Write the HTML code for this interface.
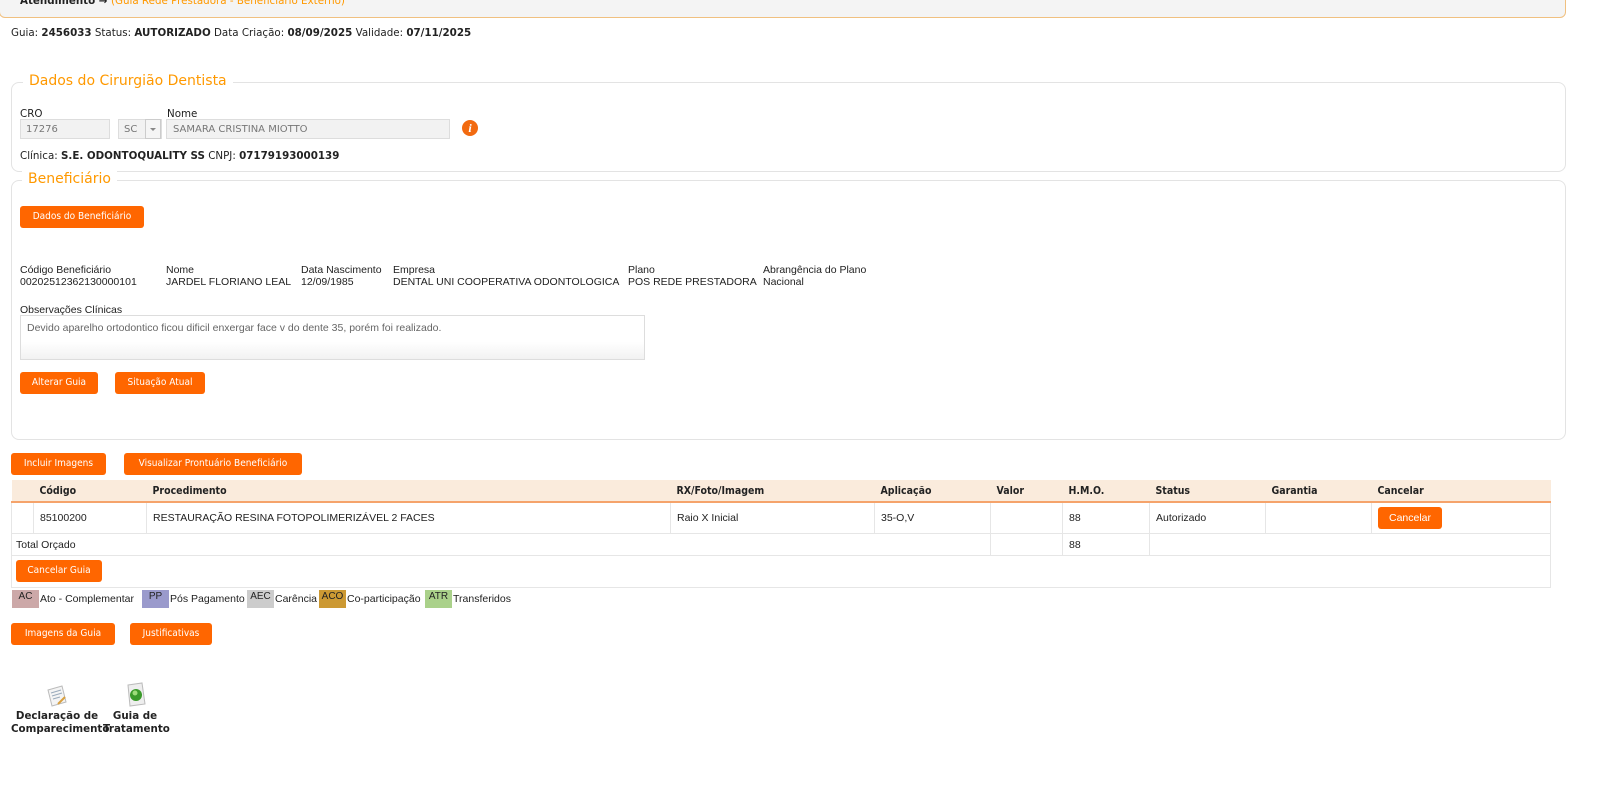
<!DOCTYPE html>
<html><head><meta charset="utf-8"><style>
body{margin:0;width:1608px;height:786px;background:#fff;font-family:"Liberation Sans",sans-serif;font-size:10.5px;color:#222;position:relative;overflow:hidden}
.a{position:absolute;white-space:nowrap}
.v{font-family:"DejaVu Sans",sans-serif;font-size:10.3px}
.btn{position:absolute;background:#ff6600;color:#fff;border-radius:3px;height:22px;line-height:22px;text-align:center;font-size:10px;font-family:"DejaVu Sans Condensed","DejaVu Sans",sans-serif}
.fs{position:absolute;border:1px solid #e3e3e3;border-radius:8px}
.lg{position:absolute;background:#fff;color:#ff9900;font-size:14px;padding:0 6px;font-family:"DejaVu Sans",sans-serif}
.inp{position:absolute;background:#f2f2f2;border:1px solid #ddd;height:20px;line-height:20px;color:#777;font-size:10px;padding-left:8px;box-sizing:border-box;font-family:"DejaVu Sans",sans-serif}
table{border-collapse:collapse;position:absolute;left:11px;top:480px;width:1540px;font-size:10.5px}
td,th{height:21px;padding:0 6px;text-align:left;border:1px solid #e6e6e6}
th{background:#faebdc;border:none;border-bottom:2px solid #f5a36b;font-family:"DejaVu Sans Condensed","DejaVu Sans",sans-serif}
.leg{position:absolute;top:590px;height:18px;line-height:14px;font-size:10px;text-align:center;width:27px}
</style></head><body>
<div class="a" style="left:-1px;top:-10px;width:1565px;height:26px;background:#f4f4f4;border:1px solid #f0c080;border-radius:0 0 6px 6px"></div>
<div class="a v" style="left:20px;top:-5px;font-weight:bold">Atendimento → <span style="color:#ff9900;font-weight:normal">(Guia Rede Prestadora - Beneficiário Externo)</span></div>
<div class="a v" style="left:11px;top:27px">Guia: <b>2456033</b> Status: <b>AUTORIZADO</b> Data Criação: <b>08/09/2025</b> Validade: <b>07/11/2025</b></div>

<div class="fs" style="left:11px;top:82px;width:1553px;height:88px"></div>
<div class="lg" style="left:23px;top:73px">Dados do Cirurgião Dentista</div>
<div class="a v" style="left:20px;top:108px">CRO</div>
<div class="a v" style="left:167px;top:108px">Nome</div>
<div class="inp" style="left:20px;top:119px;width:90px;padding-left:5px">17276</div>
<div class="inp" style="left:118px;top:119px;width:44px;padding-left:5px">SC</div>
<div class="a" style="left:145px;top:119px;width:16px;height:20px;border:1px solid #ccc;background:#f5f5f5;box-sizing:border-box"><div style="margin:8px 0 0 4px;width:0;height:0;border:3px solid transparent;border-top:3px solid #888"></div></div>
<div class="inp" style="left:166px;top:119px;width:284px;padding-left:6px">SAMARA CRISTINA MIOTTO</div>
<div class="a" style="left:462px;top:120px;width:16px;height:16px;border-radius:50%;background:#f26a10;color:#fff;font:bold italic 12px 'Liberation Serif',serif;text-align:center;line-height:16px">i</div>
<div class="a v" style="left:20px;top:150px">Clínica: <b>S.E. ODONTOQUALITY SS</b> CNPJ: <b>07179193000139</b></div>

<div class="fs" style="left:11px;top:180px;width:1553px;height:258px"></div>
<div class="lg" style="left:22px;top:171px">Beneficiário</div>
<div class="btn" style="left:20px;top:206px;width:124px">Dados do Beneficiário</div>
<div class="a" style="left:20px;top:264px;line-height:12px">Código Beneficiário<br>00202512362130000101</div>
<div class="a" style="left:166px;top:264px;line-height:12px">Nome<br>JARDEL FLORIANO LEAL</div>
<div class="a" style="left:301px;top:264px;line-height:12px">Data Nascimento<br>12/09/1985</div>
<div class="a" style="left:393px;top:264px;line-height:12px">Empresa<br>DENTAL UNI COOPERATIVA ODONTOLOGICA</div>
<div class="a" style="left:628px;top:264px;line-height:12px">Plano<br>POS REDE PRESTADORA</div>
<div class="a" style="left:763px;top:264px;line-height:12px">Abrangência do Plano<br>Nacional</div>
<div class="a" style="left:20px;top:304px">Observações Clínicas</div>
<div class="a" style="left:20px;top:315px;width:625px;height:45px;border:1px solid #ddd;background:linear-gradient(#fff 60%,#f2f2f2);box-sizing:border-box;padding:6px 6px;color:#666">Devido aparelho ortodontico ficou dificil enxergar face v do dente 35, porém foi realizado.</div>
<div class="btn" style="left:20px;top:372px;width:78px">Alterar Guia</div>
<div class="btn" style="left:115px;top:372px;width:90px">Situação Atual</div>

<div class="btn" style="left:11px;top:453px;width:95px">Incluir Imagens</div>
<div class="btn" style="left:124px;top:453px;width:178px">Visualizar Prontuário Beneficiário</div>

<table>
<tr><th style="width:10px"></th><th style="width:101px">Código</th><th style="width:512px">Procedimento</th><th style="width:192px">RX/Foto/Imagem</th><th style="width:104px">Aplicação</th><th style="width:60px">Valor</th><th style="width:75px">H.M.O.</th><th style="width:104px">Status</th><th style="width:94px">Garantia</th><th>Cancelar</th></tr>
<tr><td style="height:30px"></td><td>85100200</td><td>RESTAURAÇÃO RESINA FOTOPOLIMERIZÁVEL 2 FACES</td><td>Raio X Inicial</td><td>35-O,V</td><td></td><td>88</td><td>Autorizado</td><td></td><td><span style="display:inline-block;background:#ff6600;color:#fff;border-radius:3px;padding:0 11px;height:22px;line-height:22px">Cancelar</span></td></tr>
<tr><td colspan="5" style="padding-left:4px">Total Orçado</td><td></td><td>88</td><td colspan="3"></td></tr>
<tr><td colspan="10" style="height:31px;padding-left:4px"></td></tr>
</table>
<div class="btn" style="left:16px;top:560px;width:86px">Cancelar Guia</div>

<div class="leg" style="left:12px;background:#cca8a8">AC</div><div class="a" style="left:40px;top:593px">Ato - Complementar</div>
<div class="leg" style="left:142px;background:#9a9acc">PP</div><div class="a" style="left:170px;top:593px">Pós Pagamento</div>
<div class="leg" style="left:247px;background:#cccccc">AEC</div><div class="a" style="left:275px;top:593px">Carência</div>
<div class="leg" style="left:319px;background:#cc9933">ACO</div><div class="a" style="left:347px;top:593px">Co-participação</div>
<div class="leg" style="left:425px;background:#aad18a">ATR</div><div class="a" style="left:453px;top:593px">Transferidos</div>

<div class="btn" style="left:11px;top:623px;width:104px">Imagens da Guia</div>
<div class="btn" style="left:130px;top:623px;width:82px">Justificativas</div>

<svg class="a" style="left:45px;top:684px" width="24" height="24"><path d="M3 6 L17 2 L21 18 L7 22 Z" fill="#f4f4f4" stroke="#bbb"/><path d="M6 9 L16 6 M7 12 L17 9 M8 15 L15 13" stroke="#9ab" /><path d="M13 20 L20 13" stroke="#d9a040" stroke-width="2"/></svg>
<svg class="a" style="left:124px;top:682px" width="24" height="26"><path d="M4 3 L18 1 L21 22 L6 24 Z" fill="#eee" stroke="#bbb"/><circle cx="12" cy="13" r="6" fill="#3a9a2a"/><circle cx="11" cy="11" r="2.5" fill="#9ddc7a"/></svg>
<div class="a v" style="left:11px;top:710px;font-weight:bold;text-align:center;width:92px;line-height:13px">Declaração de<br>Comparecimento</div>
<div class="a v" style="left:103px;top:710px;font-weight:bold;text-align:center;width:64px;line-height:13px">Guia de<br>Tratamento</div>
</body></html>
